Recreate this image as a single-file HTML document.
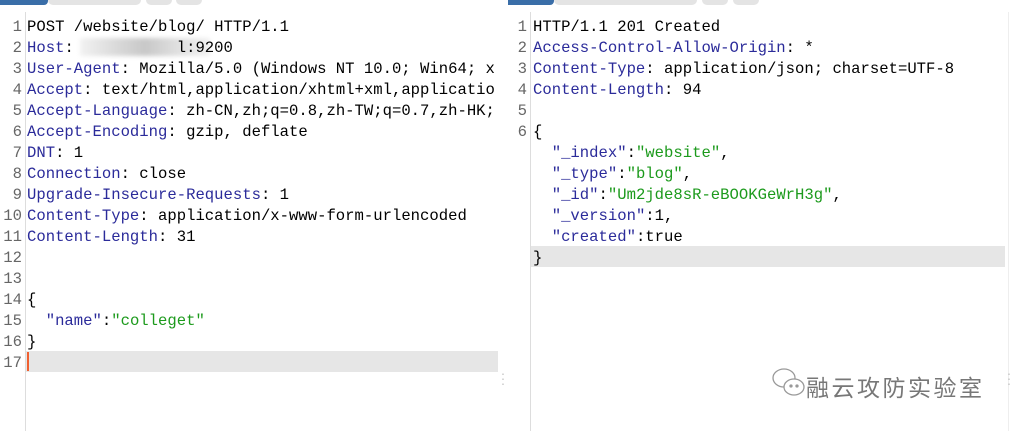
<!DOCTYPE html>
<html><head><meta charset="utf-8"><style>
body{margin:0;width:1013px;height:431px;background:#fff;position:relative;overflow:hidden;font-family:"Liberation Mono",monospace;font-size:15.6px}
.tab{position:absolute;top:0;height:5px;border-radius:0 0 6px 6px;background:#e4e4e4}
.p{position:absolute;top:17px}
.l{height:21px;line-height:21px;white-space:pre;position:relative}
.n{position:absolute;text-align:right;color:#666;width:20px}
.k{color:#2b2b9a}.s{color:#1c9a1c}
.hl{position:absolute;background:#e6e6e6}
.vl{position:absolute;top:12px;bottom:0;width:1px;background:#ddd}
</style></head><body>
<div class="tab" style="left:0;width:48px;background:#3a6ea8;border-radius:0 0 4px 0"></div>
<div class="tab" style="left:48px;width:93px"></div>
<div class="tab" style="left:146px;width:26px"></div>
<div class="tab" style="left:176px;width:26px"></div>
<div class="tab" style="left:508px;width:46px;background:#3a6ea8;border-radius:0 0 4px 0"></div>
<div class="tab" style="left:554px;width:143px"></div>
<div class="tab" style="left:702px;width:26px"></div>
<div class="tab" style="left:733px;width:26px"></div>
<div class="vl" style="left:25px"></div>
<div class="vl" style="left:530px"></div>
<div class="vl" style="left:1008px;background:#eee"></div>
<div class="hl" style="left:26px;top:351px;width:472px;height:21px"></div>
<div style="position:absolute;left:27px;top:352px;width:2px;height:19px;background:#f06030"></div>
<div class="hl" style="left:531px;top:246px;width:474px;height:21px"></div>
<div style="position:absolute;left:80px;top:38px;width:130px;height:18px;background:linear-gradient(90deg,#f2f2f2,#d8d8d8 30%,#c8c8c8 50%,#e0e0e0 75%,#f0f0f0);filter:blur(2px)"></div>
<div class="p" style="left:2px;width:496px;overflow:hidden">
<div class="l"><span class="n">1</span><span style="margin-left:25px">POST /website/blog/ HTTP/1.1</span></div>
<div class="l"><span class="n">2</span><span style="margin-left:25px"><span class="k">Host</span>:           l:9200</span></div>
<div class="l"><span class="n">3</span><span style="margin-left:25px"><span class="k">User-Agent</span>: Mozilla/5.0 (Windows NT 10.0; Win64; x</span></div>
<div class="l"><span class="n">4</span><span style="margin-left:25px"><span class="k">Accept</span>: text/html,application/xhtml+xml,applicatio</span></div>
<div class="l"><span class="n">5</span><span style="margin-left:25px"><span class="k">Accept-Language</span>: zh-CN,zh;q=0.8,zh-TW;q=0.7,zh-HK;</span></div>
<div class="l"><span class="n">6</span><span style="margin-left:25px"><span class="k">Accept-Encoding</span>: gzip, deflate</span></div>
<div class="l"><span class="n">7</span><span style="margin-left:25px"><span class="k">DNT</span>: 1</span></div>
<div class="l"><span class="n">8</span><span style="margin-left:25px"><span class="k">Connection</span>: close</span></div>
<div class="l"><span class="n">9</span><span style="margin-left:25px"><span class="k">Upgrade-Insecure-Requests</span>: 1</span></div>
<div class="l"><span class="n">10</span><span style="margin-left:25px"><span class="k">Content-Type</span>: application/x-www-form-urlencoded</span></div>
<div class="l"><span class="n">11</span><span style="margin-left:25px"><span class="k">Content-Length</span>: 31</span></div>
<div class="l"><span class="n">12</span></div>
<div class="l"><span class="n">13</span></div>
<div class="l"><span class="n">14</span><span style="margin-left:25px">{</span></div>
<div class="l"><span class="n">15</span><span style="margin-left:25px">  <span class="k">"name"</span>:<span class="s">"colleget"</span></span></div>
<div class="l"><span class="n">16</span><span style="margin-left:25px">}</span></div>
<div class="l"><span class="n">17</span></div>
</div>
<div class="p" style="left:507px;width:500px;overflow:hidden">
<div class="l"><span class="n">1</span><span style="margin-left:26px">HTTP/1.1 201 Created</span></div>
<div class="l"><span class="n">2</span><span style="margin-left:26px"><span class="k">Access-Control-Allow-Origin</span>: *</span></div>
<div class="l"><span class="n">3</span><span style="margin-left:26px"><span class="k">Content-Type</span>: application/json; charset=UTF-8</span></div>
<div class="l"><span class="n">4</span><span style="margin-left:26px"><span class="k">Content-Length</span>: 94</span></div>
<div class="l"><span class="n">5</span></div>
<div class="l"><span class="n">6</span><span style="margin-left:26px">{</span></div>
<div class="l"><span style="margin-left:26px">  <span class="k">"_index"</span>:<span class="s">"website"</span>,</span></div>
<div class="l"><span style="margin-left:26px">  <span class="k">"_type"</span>:<span class="s">"blog"</span>,</span></div>
<div class="l"><span style="margin-left:26px">  <span class="k">"_id"</span>:<span class="s">"Um2jde8sR-eBOOKGeWrH3g"</span>,</span></div>
<div class="l"><span style="margin-left:26px">  <span class="k">"_version"</span>:1,</span></div>
<div class="l"><span style="margin-left:26px">  <span class="k">"created"</span>:true</span></div>
<div class="l"><span style="margin-left:26px">}</span></div>
</div>
<div style="position:absolute;left:500px;top:373px;color:#bbb;font-size:10px;line-height:5px">·<br>·<br>·</div>
<div style="position:absolute;left:1006px;top:373px;color:#bbb;font-size:10px;line-height:5px">·<br>·<br>·</div>
<svg style="position:absolute;left:770px;top:365px" width="40" height="36" viewBox="0 0 40 36" fill="none" stroke="#999" stroke-width="1.3"><ellipse cx="14" cy="13" rx="11" ry="9"/><ellipse cx="24" cy="22" rx="10" ry="8" fill="#fff"/><circle cx="21" cy="21" r="1" fill="#999"/><circle cx="27" cy="21" r="1" fill="#999"/></svg>
<div style="position:absolute;left:806px;top:369px;font-family:'Liberation Sans','Noto Sans CJK SC',sans-serif;font-size:23px;color:#777;letter-spacing:2.5px">融云攻防实验室</div>
</body></html>
